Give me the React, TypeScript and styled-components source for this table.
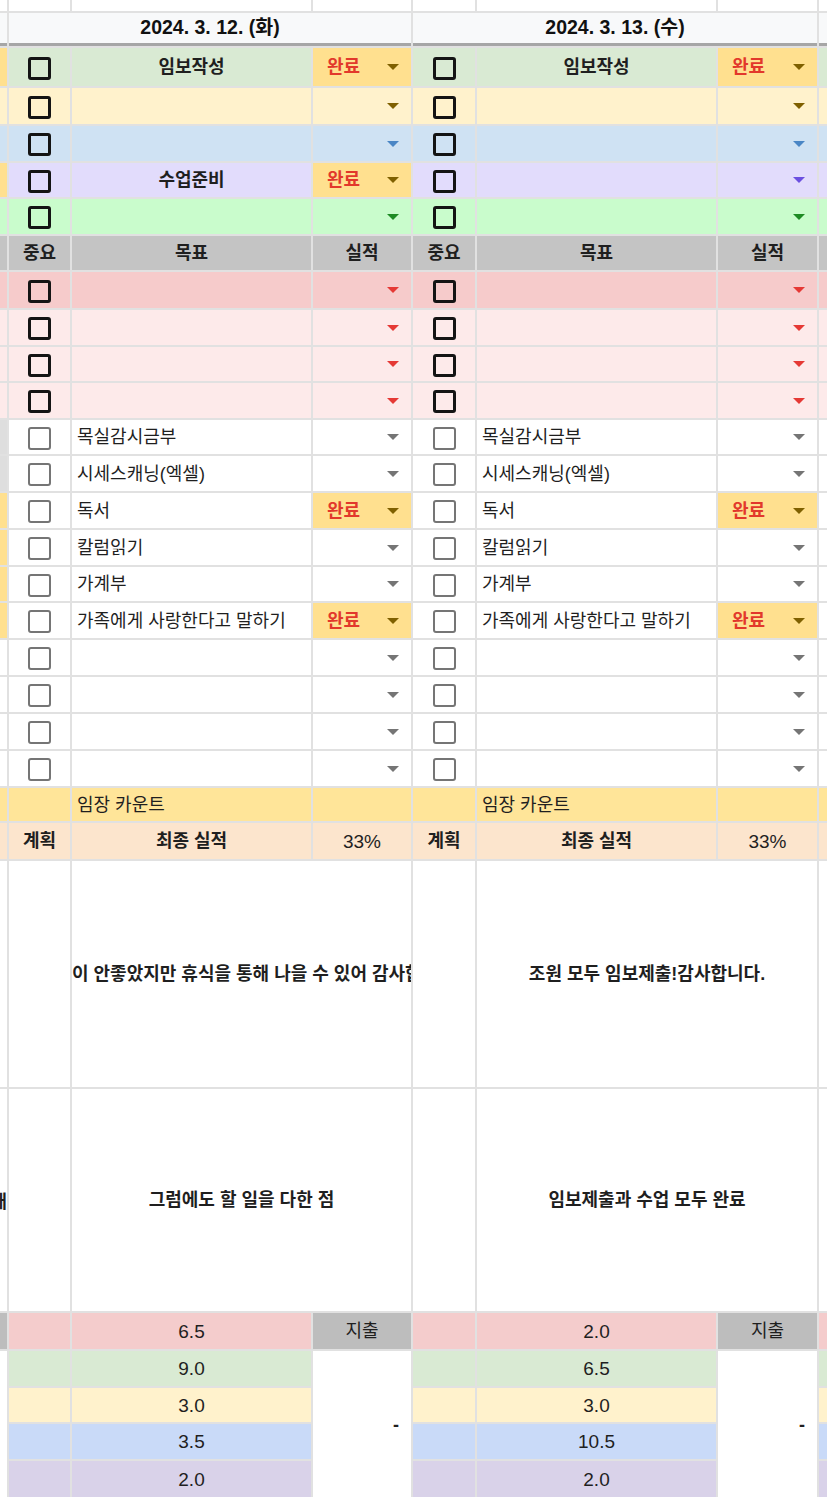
import styled, { createGlobalStyle, css } from "styled-components";

const GlobalStyle = createGlobalStyle`
  * { box-sizing: border-box; }
  html, body { margin: 0; padding: 0; background: #fff; }
  body {
    font-family: "Liberation Sans", "Noto Sans CJK KR", sans-serif;
    color: #1f1f1f;
    overflow: hidden;
  }
`;

// row edges read off the sheet; every track is followed by a 2px gridline
const BOUNDS = [
  0, 13, 48, 88, 126, 163, 199, 236, 272, 310, 347, 383, 420, 456, 493, 530,
  567, 603, 640, 677, 714, 751, 788, 823, 861, 1089, 1313, 1351, 1388, 1424,
  1461, 1500,
];
const ROWS = BOUNDS.slice(1)
  .map((b, i) => `${b - BOUNDS[i] - 2}px`)
  .join(" ");

const WHITE = "#ffffff";
const DATE_BG = "#f8f9fa";
const DONE = "#ffe08f";
const GREEN = "#d9ead3";
const YELLOW = "#fff2cc";
const BLUE = "#cfe2f3";
const LAVENDER = "#e2dcfc";
const MINT = "#c9fccc";
const GRAY = "#c4c4c4";
const PINK = "#f6cbcb";
const LIGHT_PINK = "#fdeaea";
const LIGHT_GRAY = "#dedede";
const IMJANG = "#ffe599";
const PEACH = "#fce5cd";
const HOUR_COLORS = ["#f4cccc", "#d9ead3", "#fff2cc", "#c9daf8", "#d9d2e9"];

const OLIVE = "#7f6000";

type Task = { bg: string; arrow: string; label?: string; done?: boolean };
type Note = { text: string; clip?: boolean };
type DayData = {
  date: string;
  cols: string;
  tasks: Task[];
  goals: { label: string; done?: boolean }[];
  notes: Note[];
  hours: string[];
};

const GOALS = [
  { label: "목실감시금부" },
  { label: "시세스캐닝(엑셀)" },
  { label: "독서", done: true },
  { label: "칼럼읽기" },
  { label: "가계부" },
  { label: "가족에게 사랑한다고 말하기", done: true },
  { label: "" },
  { label: "" },
  { label: "" },
  { label: "" },
];

const DAYS: DayData[] = [
  {
    date: "2024. 3. 12. (화)",
    cols: "61px 239px 98px",
    tasks: [
      { bg: GREEN, arrow: OLIVE, label: "임보작성", done: true },
      { bg: YELLOW, arrow: OLIVE },
      { bg: BLUE, arrow: "#4a86c5" },
      { bg: LAVENDER, arrow: "#6b4fe0", label: "수업준비", done: true },
      { bg: MINT, arrow: "#1e8b24" },
    ],
    goals: GOALS,
    notes: [
      { text: "이 안좋았지만 휴식을 통해 나을 수 있어 감사합니다", clip: true },
      { text: "그럼에도 할 일을 다한 점" },
    ],
    hours: ["6.5", "9.0", "3.0", "3.5", "2.0"],
  },
  {
    date: "2024. 3. 13. (수)",
    cols: "62px 239px 99px",
    tasks: [
      { bg: GREEN, arrow: OLIVE, label: "임보작성", done: true },
      { bg: YELLOW, arrow: OLIVE },
      { bg: BLUE, arrow: "#4a86c5" },
      { bg: LAVENDER, arrow: "#6b4fe0" },
      { bg: MINT, arrow: "#1e8b24" },
    ],
    goals: GOALS,
    notes: [
      { text: "조원 모두 임보제출!감사합니다." },
      { text: "임보제출과 수업 모두 완료" },
    ],
    hours: ["2.0", "6.5", "3.0", "10.5", "2.0"],
  },
];

type Edge = { bg: string; rows?: number; text?: string; date?: boolean };

const repeat = (bg: string, n: number): Edge[] => Array.from({ length: n }, () => ({ bg }));

// the previous day's result column, cut off at the left edge
const LEFT_EDGE: Edge[] = [
  { bg: WHITE },
  { bg: DATE_BG, date: true },
  { bg: DONE },
  { bg: YELLOW },
  { bg: BLUE },
  { bg: DONE },
  { bg: MINT },
  { bg: GRAY },
  { bg: PINK },
  ...repeat(LIGHT_PINK, 3),
  ...repeat(LIGHT_GRAY, 2),
  ...repeat(DONE, 4),
  ...repeat(WHITE, 4),
  { bg: IMJANG },
  { bg: PEACH },
  { bg: WHITE },
  { bg: WHITE, text: "해" },
  { bg: "#bdbdbd" },
  { bg: WHITE, rows: 4 },
];

// the next day's checkbox column, cut off at the right edge
const RIGHT_EDGE: Edge[] = [
  { bg: WHITE },
  { bg: DATE_BG, date: true },
  { bg: GREEN },
  { bg: YELLOW },
  { bg: BLUE },
  { bg: LAVENDER },
  { bg: MINT },
  { bg: GRAY },
  { bg: PINK },
  ...repeat(LIGHT_PINK, 3),
  ...repeat(WHITE, 10),
  { bg: IMJANG },
  { bg: PEACH },
  ...repeat(WHITE, 2),
  ...HOUR_COLORS.map((bg) => ({ bg })),
];

const Sheet = styled.div`
  display: flex;
  gap: 2px;
  width: 827px;
  height: 1497px;
  overflow: hidden;
  background: #e1e1e1;
`;

const Column = styled.div<{ $cols: string }>`
  flex: none;
  display: grid;
  grid-template-columns: ${(p) => p.$cols};
  grid-template-rows: ${ROWS};
  gap: 2px;
`;

const EdgeCell = styled.div<{ $bg: string; $rows?: number; $date?: boolean }>`
  background: ${(p) => p.$bg};
  display: flex;
  align-items: center;
  justify-content: flex-end;
  overflow: hidden;
  white-space: nowrap;
  font-size: 18px;
  font-weight: 700;
  ${(p) => p.$rows && css`grid-row: span ${p.$rows};`}
  ${(p) => p.$date && css`border-bottom: 3px solid #a6a6a6;`}
`;

const Cell = styled.div<{ $bg?: string }>`
  background: ${(p) => p.$bg ?? WHITE};
  display: flex;
  align-items: center;
  min-width: 0;
  overflow: hidden;
  white-space: nowrap;
  font-size: 18px;
  line-height: 1;
`;

const DateCell = styled(Cell)`
  grid-column: span 3;
  justify-content: center;
  background: ${DATE_BG};
  border-bottom: 3px solid #a6a6a6;
  font-size: 19.5px;
  font-weight: 700;
  color: #111;
`;

const CheckCell = styled(Cell)`
  justify-content: center;
  padding-top: 2px;
`;

const GoalCell = styled(Cell)<{ $center?: boolean; $bold?: boolean }>`
  padding-left: 5px;
  justify-content: ${(p) => (p.$center ? "center" : "flex-start")};
  font-weight: ${(p) => (p.$bold ? 700 : 400)};
  ${(p) => p.$center && css`padding-left: 0;`}
`;

const ResultCell = styled(Cell)`
  padding: 0 12px 0 14px;
`;

const HeadCell = styled(Cell)`
  justify-content: center;
  background: ${GRAY};
  font-weight: 700;
`;

const SummaryCell = styled(Cell)<{ $bold?: boolean; $latin?: boolean }>`
  justify-content: center;
  background: ${PEACH};
  font-weight: ${(p) => (p.$bold ? 700 : 400)};
  font-size: ${(p) => (p.$latin ? "19px" : "18px")};
`;

const NoteCell = styled(Cell)<{ $clip?: boolean }>`
  grid-column: span 2;
  justify-content: ${(p) => (p.$clip ? "flex-start" : "center")};
  font-weight: 700;
`;

const HourCell = styled(Cell)`
  justify-content: center;
  font-size: 19px;
`;

const SpendHead = styled(Cell)`
  justify-content: center;
  background: #bdbdbd;
`;

const SpendCell = styled(Cell)`
  grid-row: span 4;
  justify-content: flex-end;
  padding-right: 12px;
  font-weight: 700;
`;

const Box = styled.span<{ $light?: boolean }>`
  width: 23px;
  height: 23px;
  border-radius: 3px;
  border: ${(p) => (p.$light ? "2.5px solid #757575" : "3px solid #141414")};
`;

const Triangle = styled.span<{ $color: string }>`
  margin-left: auto;
  width: 0;
  height: 0;
  border-left: 6px solid transparent;
  border-right: 6px solid transparent;
  border-top: 6px solid ${(p) => p.$color};
`;

const DoneLabel = styled.span`
  color: #e2382b;
  font-weight: 700;
`;

const EdgeColumn = ({ cells, width }: { cells: Edge[]; width: string }) => (
  <Column $cols={width}>
    {cells.map((c, i) => (
      <EdgeCell key={i} $bg={c.bg} $rows={c.rows} $date={c.date}>
        {c.text}
      </EdgeCell>
    ))}
  </Column>
);

// rows are just groups of grid cells; the grid places them
const Row = ({ children }: { children: React.ReactNode }) => <>{children}</>;

const Day = ({ day }: { day: DayData }) => (
  <Column $cols={day.cols}>
    <Cell />
    <Cell />
    <Cell />
    <DateCell>{day.date}</DateCell>

    {day.tasks.map((t, i) => (
      <Row key={`t${i}`}>
        <CheckCell $bg={t.bg}>
          <Box />
        </CheckCell>
        <GoalCell $bg={t.bg} $center $bold>
          {t.label}
        </GoalCell>
        <ResultCell $bg={t.done ? DONE : t.bg}>
          {t.done && <DoneLabel>완료</DoneLabel>}
          <Triangle $color={t.done ? OLIVE : t.arrow} />
        </ResultCell>
      </Row>
    ))}

    <HeadCell>중요</HeadCell>
    <HeadCell>목표</HeadCell>
    <HeadCell>실적</HeadCell>

    {[PINK, LIGHT_PINK, LIGHT_PINK, LIGHT_PINK].map((bg, i) => (
      <Row key={`p${i}`}>
        <CheckCell $bg={bg}>
          <Box />
        </CheckCell>
        <GoalCell $bg={bg} />
        <ResultCell $bg={bg}>
          <Triangle $color="#e53935" />
        </ResultCell>
      </Row>
    ))}

    {day.goals.map((g, i) => (
      <Row key={`g${i}`}>
        <CheckCell>
          <Box $light />
        </CheckCell>
        <GoalCell>{g.label}</GoalCell>
        <ResultCell $bg={g.done ? DONE : WHITE}>
          {g.done && <DoneLabel>완료</DoneLabel>}
          <Triangle $color={g.done ? OLIVE : "#757575"} />
        </ResultCell>
      </Row>
    ))}

    <Cell $bg={IMJANG} />
    <GoalCell $bg={IMJANG}>임장 카운트</GoalCell>
    <Cell $bg={IMJANG} />

    <SummaryCell $bold>계획</SummaryCell>
    <SummaryCell $bold>최종 실적</SummaryCell>
    <SummaryCell $latin>33%</SummaryCell>

    {day.notes.map((n, i) => (
      <Row key={`n${i}`}>
        <Cell />
        <NoteCell $clip={n.clip}>{n.text}</NoteCell>
      </Row>
    ))}

    {day.hours.map((h, i) => (
      <Row key={`h${i}`}>
        <Cell $bg={HOUR_COLORS[i]} />
        <HourCell $bg={HOUR_COLORS[i]}>{h}</HourCell>
        {i === 0 && <SpendHead>지출</SpendHead>}
        {i === 1 && <SpendCell>-</SpendCell>}
      </Row>
    ))}
  </Column>
);

const App = () => (
  <>
    <GlobalStyle />
    <Sheet>
      <EdgeColumn cells={LEFT_EDGE} width="7px" />
      {DAYS.map((d) => (
        <Day key={d.date} day={d} />
      ))}
      <EdgeColumn cells={RIGHT_EDGE} width="8px" />
    </Sheet>
  </>
);

export default App;
